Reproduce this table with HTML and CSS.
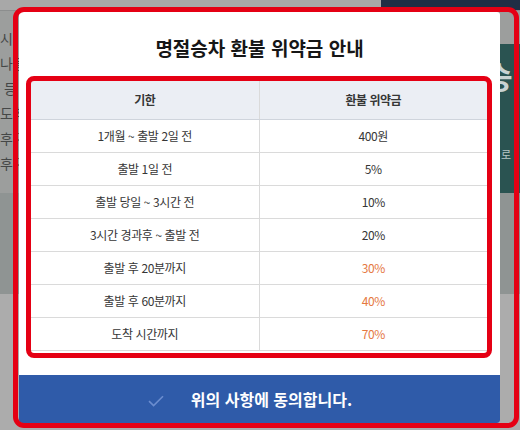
FILE: index.html
```html
<!DOCTYPE html>
<html lang="ko">
<head>
<meta charset="utf-8">
<title>명절승차 환불 위약금 안내</title>
<link rel="stylesheet" href="styles.css">
</head>
<body>
<div class="page">
  <div class="topbar"><div class="topbar-left"></div><div class="topbar-right"></div></div>
  <div class="main">
    <div class="content">
      <p>시) 출발 전까지</p>
      <p>나을 경우 환불</p>
      <p class="indent">등 승차권 반환</p>
      <p>도착 시간까지</p>
      <p>후 경과 시 위약금</p>
      <p>후 경과 시 환불</p>
    </div>
    <aside class="side">
      <div class="side-box"><span class="side-big">승</span><span class="side-small">로</span></div>
    </aside>
  </div>
  <div class="band"></div>
</div>

<div class="modal">
  <h2 class="modal-title">명절승차 환불 위약금 안내</h2>
  <table class="fee">
    <thead>
      <tr><th>기한</th><th>환불 위약금</th></tr>
    </thead>
    <tbody>
      <tr><td>1개월 ~ 출발 2일 전</td><td>400원</td></tr>
      <tr><td>출발 1일 전</td><td>5%</td></tr>
      <tr><td>출발 당일 ~ 3시간 전</td><td>10%</td></tr>
      <tr><td>3시간 경과후 ~ 출발 전</td><td>20%</td></tr>
      <tr><td>출발 후 20분까지</td><td class="hot">30%</td></tr>
      <tr><td>출발 후 60분까지</td><td class="hot">40%</td></tr>
      <tr><td>도착 시간까지</td><td class="hot">70%</td></tr>
    </tbody>
  </table>
  <button class="agree" type="button">
    <svg class="check" width="16" height="12" viewBox="0 0 16 12" aria-hidden="true"><path d="M1 6.2 L5.6 10.6 L15 1.2" fill="none" stroke="#6b8dcf" stroke-width="1.6"/></svg>
    <span>위의 사항에 동의합니다.</span>
  </button>
</div>

<div class="mark mark-modal"></div>
<div class="mark mark-table"></div>
</body>
</html>
```

FILE: styles.css
```css
* { box-sizing: border-box; }
html, body { margin: 0; padding: 0; }
body {
  width: 520px;
  height: 430px;
  overflow: hidden;
  position: relative;
  background: #acacac;
  font-family: "Noto Sans CJK KR", "Noto Sans", sans-serif;
}

/* dimmed page behind the modal */
.topbar { display: flex; height: 11px; border-bottom: 1px solid #8c8e8e; }
.topbar-left { flex: 1; background: #a8a8a8; }
.topbar-right { width: 139px; background: #1f2e45; }

.main { display: flex; height: 182px; background: #9c9e9d; }
.content { flex: 1; padding-top: 15px; }
.content p {
  margin: 0;
  font-size: 14px;
  line-height: 25px;
  color: #454747;
  white-space: nowrap;
}
.content .indent { padding-left: 4px; }

.side { width: 22px; padding-top: 33px; }
.side-box {
  height: 149px;
  background: #2a5351;
  display: flex;
  flex-direction: column;
  overflow: hidden;
}
.side-big {
  font-size: 30px;
  font-weight: 700;
  line-height: 30px;
  color: #c8d3d2;
  margin-top: 16px;
  margin-left: -13px;
}
.side-small {
  font-size: 11px;
  line-height: 12px;
  color: #b9c6c5;
  margin-top: 58px;
  margin-left: 3px;
}

.band { height: 101px; background: #8f9493; }

/* modal */
.modal {
  position: absolute;
  left: 19px;
  top: 12px;
  width: 481px;
  height: 411px;
  background: #fff;
  display: flex;
  flex-direction: column;
  border-radius: 3px;
  overflow: hidden;
}
.modal-title {
  margin: 24px 0 21px;
  line-height: 24px;
  text-align: center;
  font-size: 19px;
  font-weight: 700;
  letter-spacing: 0;
  color: #161616;
}

.fee {
  margin: 0 13px 0 12px;
  width: 456px;
  border-collapse: collapse;
  table-layout: fixed;
}
.fee th, .fee td {
  padding: 0;
  text-align: center;
  vertical-align: middle;
  border-bottom: 1px solid #dadada;
  color: #363636;
  white-space: nowrap;
}
.fee th + th, .fee td + td { border-left: 1px solid #dadada; }
.fee th {
  height: 38px;
  background: #ebeef4;
  border-bottom-color: #cfd4dc;
  font-size: 12px;
  font-weight: 700;
  letter-spacing: -0.5px;
}
.fee td {
  height: 33px;
  font-size: 12px;
  letter-spacing: -0.4px;
}
.fee td.hot { color: #e5783f; }

.agree {
  margin-top: auto;
  height: 48px;
  border: 0;
  padding: 0 19px 0 0;
  background: #2f5ba9;
  display: flex;
  align-items: center;
  justify-content: center;
  gap: 27px;
  font-family: inherit;
  font-size: 16px;
  font-weight: 700;
  letter-spacing: 0;
  color: #fff;
}
.check { display: block; margin-top: 4px; }

/* red annotation outlines */
.mark {
  position: absolute;
  border: 5px solid #e50014;
  pointer-events: none;
}
.mark-modal { left: 13px; top: 7px; width: 506px; height: 421px; border-radius: 11px; }
.mark-table { left: 26px; top: 76px; width: 466px; height: 282px; border-radius: 8px; }
```
